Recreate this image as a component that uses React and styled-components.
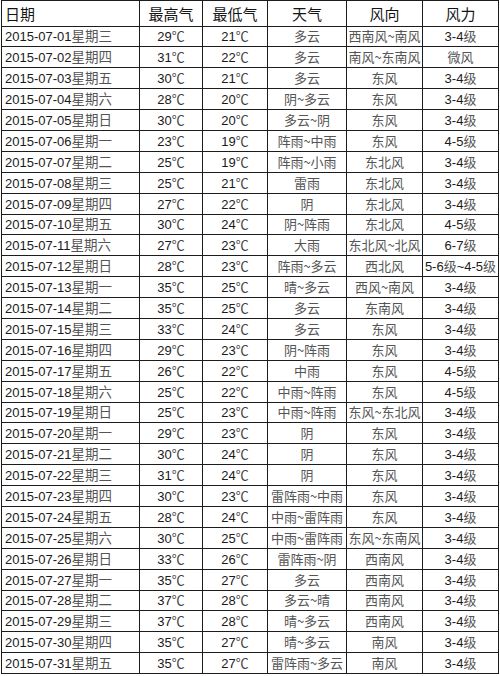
import React from "react";
import styled, { createGlobalStyle } from "styled-components";

const GlobalStyle = createGlobalStyle`
  html, body {
    margin: 0;
    padding: 0;
    background: #fff;
  }
  body {
    font-family: "Liberation Sans", Arial, "Noto Sans CJK SC", sans-serif;
  }
`;

const rows = [
  ["01", "星期三", 29, 21, "多云", "西南风~南风", "3-4级"],
  ["02", "星期四", 31, 22, "多云", "南风~东南风", "微风"],
  ["03", "星期五", 30, 21, "多云", "东风", "3-4级"],
  ["04", "星期六", 28, 20, "阴~多云", "东风", "3-4级"],
  ["05", "星期日", 30, 20, "多云~阴", "东风", "3-4级"],
  ["06", "星期一", 23, 19, "阵雨~中雨", "东风", "4-5级"],
  ["07", "星期二", 25, 19, "阵雨~小雨", "东北风", "3-4级"],
  ["08", "星期三", 25, 21, "雷雨", "东北风", "3-4级"],
  ["09", "星期四", 27, 22, "阴", "东北风", "3-4级"],
  ["10", "星期五", 30, 24, "阴~阵雨", "东北风", "4-5级"],
  ["11", "星期六", 27, 23, "大雨", "东北风~北风", "6-7级"],
  ["12", "星期日", 28, 23, "阵雨~多云", "西北风", "5-6级~4-5级"],
  ["13", "星期一", 35, 25, "晴~多云", "西风~南风", "3-4级"],
  ["14", "星期二", 35, 25, "多云", "东南风", "3-4级"],
  ["15", "星期三", 33, 24, "多云", "东风", "3-4级"],
  ["16", "星期四", 29, 23, "阴~阵雨", "东风", "3-4级"],
  ["17", "星期五", 26, 22, "中雨", "东风", "4-5级"],
  ["18", "星期六", 25, 22, "中雨~阵雨", "东风", "4-5级"],
  ["19", "星期日", 25, 23, "中雨~阵雨", "东风~东北风", "3-4级"],
  ["20", "星期一", 29, 23, "阴", "东风", "3-4级"],
  ["21", "星期二", 30, 24, "阴", "东风", "3-4级"],
  ["22", "星期三", 31, 24, "阴", "东风", "3-4级"],
  ["23", "星期四", 30, 23, "雷阵雨~中雨", "东风", "3-4级"],
  ["24", "星期五", 28, 24, "中雨~雷阵雨", "东风", "3-4级"],
  ["25", "星期六", 30, 25, "中雨~雷阵雨", "东风~东南风", "3-4级"],
  ["26", "星期日", 33, 26, "雷阵雨~阴", "西南风", "3-4级"],
  ["27", "星期一", 35, 27, "多云", "西南风", "3-4级"],
  ["28", "星期二", 37, 28, "多云~晴", "西南风", "3-4级"],
  ["29", "星期三", 37, 28, "晴~多云", "西南风", "3-4级"],
  ["30", "星期四", 35, 27, "晴~多云", "南风", "3-4级"],
  ["31", "星期五", 35, 27, "雷阵雨~多云", "南风", "3-4级"],
];

const Sheet = styled.table`
  border-collapse: collapse;
  table-layout: fixed;
  width: 497px;
  margin: 0 0 0 1px;
  color: #1a1a1a;
`;

const HeadCell = styled.th`
  height: 24.5px;
  padding: 0;
  border: 1.5px solid #1c1c1c;
  font-family: "Noto Sans CJK SC", sans-serif;
  font-weight: 400;
  font-size: 15px;
  text-align: ${(p) => (p.$left ? "left" : "center")};
  padding-left: ${(p) => (p.$left ? "3px" : "0")};
  color: #151515;
  line-height: 1;
`;

const Cell = styled.td`
  height: 19.9px;
  padding: 0;
  padding-left: ${(p) => (p.$left ? "3px" : "0")};
  border: 1.5px solid #1c1c1c;
  text-align: ${(p) => (p.$left ? "left" : "center")};
  font-size: 13px;
  line-height: 1;
  white-space: nowrap;
  overflow: hidden;
`;

const Num = styled.span`
  font-family: "Liberation Sans", Arial, sans-serif;
  color: #1a1a1a;
  font-size: 13px;
`;

const Han = styled.span`
  font-family: "Noto Sans CJK SC", sans-serif;
  color: #555;
  font-size: ${(p) => p.$size || "13px"};
`;

const Degree = styled.span`
  font-family: "Noto Sans CJK SC", sans-serif;
  color: #444;
  font-size: 13px;
`;

// "3-4级" mixes digits with a Han suffix
function Level({ text }) {
  if (text === "微风") return <Han>{text}</Han>;
  const parts = text.split(/(级)/).filter(Boolean);
  return parts.map((p, i) =>
    p === "级" ? (
      <Han key={i}>{p}</Han>
    ) : (
      <Num key={i}>{p}</Num>
    )
  );
}

export default function App() {
  return (
    <>
      <GlobalStyle />
      <Sheet>
        <colgroup>
          <col style={{ width: 138 }} />
          <col style={{ width: 63 }} />
          <col style={{ width: 65 }} />
          <col style={{ width: 79 }} />
          <col style={{ width: 76 }} />
          <col style={{ width: 76 }} />
        </colgroup>
        <thead>
          <tr>
            <HeadCell $left>日期</HeadCell>
            <HeadCell>最高气</HeadCell>
            <HeadCell>最低气</HeadCell>
            <HeadCell>天气</HeadCell>
            <HeadCell>风向</HeadCell>
            <HeadCell>风力</HeadCell>
          </tr>
        </thead>
        <tbody>
          {rows.map(([day, week, hi, lo, sky, wind, force]) => (
            <tr key={day}>
              <Cell $left>
                <Num>2015-07-{day}</Num>
                <Han $size="13.5px">{week}</Han>
              </Cell>
              <Cell>
                <Num>{hi}</Num>
                <Degree>℃</Degree>
              </Cell>
              <Cell>
                <Num>{lo}</Num>
                <Degree>℃</Degree>
              </Cell>
              <Cell>
                <Han>{sky}</Han>
              </Cell>
              <Cell>
                <Han>{wind}</Han>
              </Cell>
              <Cell>
                <Level text={force} />
              </Cell>
            </tr>
          ))}
        </tbody>
      </Sheet>
    </>
  );
}
